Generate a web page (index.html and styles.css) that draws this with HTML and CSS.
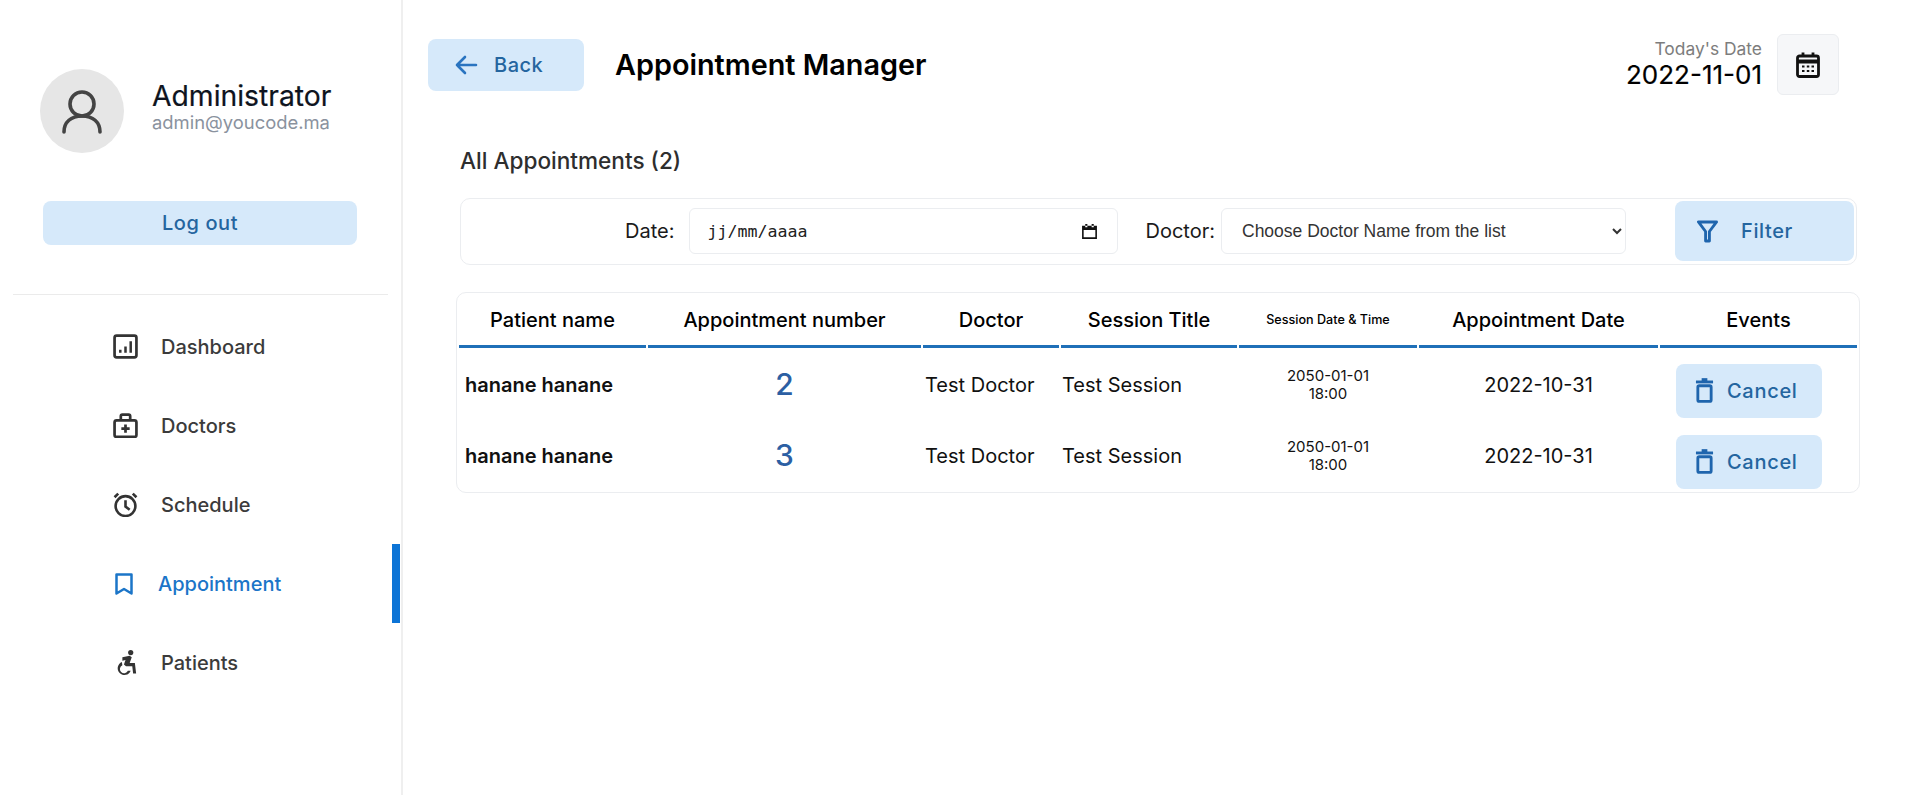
FILE: index.html
```html
<!DOCTYPE html>
<html lang="en">
<head>
<meta charset="utf-8">
<title>Appointment Manager</title>
<link rel="stylesheet" href="styles.css">
</head>
<body>
<div class="app">
  <aside class="sidebar">
    <div class="profile">
      <div class="avatar">
        <svg viewBox="0 0 40 44" width="40" height="44" fill="none" stroke="#444" stroke-width="3.6" stroke-linecap="round"><circle cx="20" cy="14" r="12"/><path d="M2 42c0-10 7-16 18-16s18 6 18 16"/></svg>
      </div>
      <div class="who">
        <div class="who-name">Administrator</div>
        <div class="who-mail">admin@youcode.ma</div>
      </div>
    </div>
    <button class="btn logout">Log out</button>
    <hr class="divider">
    <nav class="nav">
      <a class="nav-item">
        <svg class="nav-icon" viewBox="0 0 24 24" fill="none" stroke="#333" stroke-width="2.6"><rect x="1.500" y="1.500" width="21" height="21" rx="2"/><path d="M7 18v-3M12 18v-6M17 18V7" stroke-width="2.400"/></svg>
        <span>Dashboard</span>
      </a>
      <a class="nav-item">
        <svg class="nav-icon" viewBox="0 0 24 24" fill="none" stroke="#333" stroke-width="2.6"><rect x="1.500" y="7" width="21" height="16" rx="2"/><path d="M7.500 7V3a1.500 1.500 0 0 1 1.500-1.500h6A1.500 1.500 0 0 1 16.500 3v4M12 11v8M8 15h8"/></svg>
        <span>Doctors</span>
      </a>
      <a class="nav-item">
        <svg class="nav-icon" viewBox="0 0 24 24" fill="none" stroke="#333" stroke-width="2.5"><circle cx="12" cy="13.500" r="9.500"/><path d="M12 8v6l4 3M1.500 5 5 1.500M22.500 5 19 1.500"/></svg>
        <span>Schedule</span>
      </a>
      <a class="nav-item active">
        <svg class="nav-icon mark" viewBox="0 0 18 22" fill="none" stroke="#1b75c8" stroke-width="2.500"><path d="M1.500 1.500h15v19L9 16l-7.500 4.500z" stroke-linejoin="round"/></svg>
        <span>Appointment</span>
      </a>
      <a class="nav-item">
        <svg class="nav-icon" viewBox="0 0 24 24" fill="#333"><circle cx="17" cy="2.500" r="2.500"/><path d="M9 7 16 5.500l2 1.500-2 5.500h5l1.200 10h-2.900l-.8-7H12.500L10.500 14l1.500-4.500-3 .8z"/><path d="M8.500 11.500a6.500 6.500 0 1 0 8.500 8.500h-2.700a4 4 0 1 1-5.300-5.300z"/></svg>
        <span>Patients</span>
      </a>
    </nav>
  </aside>
  <main class="main">
    <header class="topbar">
      <button class="btn back">
        <svg viewBox="0 0 24 24" width="24" height="24" fill="none" stroke="#2a74c0" stroke-width="2.600" stroke-linecap="round" stroke-linejoin="round"><path d="M22 12H3M11 4l-8 8 8 8"/></svg>
        <span>Back</span>
      </button>
      <h1 class="title">Appointment Manager</h1>
      <div class="today">
        <div class="today-label">Today's Date</div>
        <div class="today-value">2022-11-01</div>
      </div>
      <div class="calendar">
        <svg viewBox="0 0 24 26" width="24" height="26" fill="none" stroke="#111" stroke-width="2.800"><rect x="1.500" y="4" width="21" height="20.500" rx="2"/><path d="M1.500 9.500h21" stroke-width="4"/><path d="M7 0.500V4M17 0.500V4"/><path d="M6 14.500h2.500M10.800 14.500h2.500M15.500 14.500h2.500M6 19h2.500M10.800 19h2.500M15.500 19h2.500" stroke-width="2.200"/></svg>
      </div>
    </header>
    <section class="content">
      <h2 class="section-title">All Appointments (2)</h2>
      <form class="filter">
        <label class="filter-label date-label">Date:</label>
        <div class="field date-field">
          <span>jj/mm/aaaa</span>
          <svg viewBox="0 0 16 16" width="17" height="17" fill="#111"><path d="M1 2.500h14V15H1zM2.500 6.500v7h11v-7zM4 1h2v3H4zM10 1h2v3h-2z" fill-rule="evenodd"/></svg>
        </div>
        <label class="filter-label doctor-label">Doctor:</label>
        <select class="field doctor-select"><option>Choose Doctor Name from the list</option></select>
        <button type="button" class="btn filter-btn">
          <svg viewBox="0 0 22 24" width="21" height="23" fill="none" stroke="#1f65ad" stroke-width="3" stroke-linejoin="round"><path d="M1.500 2h19l-7.500 10v10h-4V12z"/></svg>
          <span>Filter</span>
        </button>
      </form>
      <div class="table-wrap">
        <table class="table">
          <colgroup>
            <col class="c1"><col class="c2"><col class="c3"><col class="c4"><col class="c5"><col class="c6"><col class="c7">
          </colgroup>
          <thead>
            <tr>
              <th>Patient name</th>
              <th>Appointment number</th>
              <th>Doctor</th>
              <th>Session Title</th>
              <th class="small-head">Session Date &amp; Time</th>
              <th>Appointment Date</th>
              <th>Events</th>
            </tr>
          </thead>
          <tbody>
            <tr>
              <td class="patient">hanane hanane</td>
              <td class="num">2</td>
              <td class="doc">Test Doctor</td>
              <td>Test Session</td>
              <td class="when">2050-01-01<br>18:00</td>
              <td class="center">2022-10-31</td>
              <td class="events"><button class="btn cancel"><svg viewBox="0 0 20 26" width="19" height="25" fill="none" stroke="#1f65ad" stroke-width="3"><rect x="3" y="8" width="14" height="16.500" rx="1.500"/><path d="M1 4h18" stroke-width="3"/><path d="M7 1.500h6" stroke-width="3"/></svg><span>Cancel</span></button></td>
            </tr>
            <tr>
              <td class="patient">hanane hanane</td>
              <td class="num">3</td>
              <td class="doc">Test Doctor</td>
              <td>Test Session</td>
              <td class="when">2050-01-01<br>18:00</td>
              <td class="center">2022-10-31</td>
              <td class="events"><button class="btn cancel"><svg viewBox="0 0 20 26" width="19" height="25" fill="none" stroke="#1f65ad" stroke-width="3"><rect x="3" y="8" width="14" height="16.500" rx="1.500"/><path d="M1 4h18" stroke-width="3"/><path d="M7 1.500h6" stroke-width="3"/></svg><span>Cancel</span></button></td>
            </tr>
          </tbody>
        </table>
      </div>
    </section>
  </main>
</div>
</body>
</html>
```
FILE: styles.css
```css
* { box-sizing: border-box; }
html, body { margin: 0; height: 100%; background: #fff; overflow: hidden; }
body { font-family: Inter, "Liberation Sans", sans-serif; color: #000; }
.app { display: flex; height: 795px; }

.btn {
  border: 0; background: #d6e9fa; border-radius: 8px; font-family: inherit; color: #24659f;
  font-weight: 500; display: flex; align-items: center; justify-content: center;
}

/* sidebar */
.sidebar { width: 403px; flex: none; border-right: 2px solid #efefef; padding-top: 69px; }
.profile { display: flex; align-items: flex-start; padding-left: 40px; gap: 28px; height: 85px; }
.avatar { width: 84px; height: 84px; border-radius: 50%; background: #e6e6e6; display: flex; align-items: center; justify-content: center; flex: none; padding-top: 2px; }
.who { padding-top: 11px; }
.who-name { font-size: 28.300px; font-weight: 400; line-height: 32px; color: #0e1420; -webkit-text-stroke: 0.2px #0e1420; }
.who-mail { font-size: 18.400px; line-height: 22px; color: #8a929e; margin-top: -1px; }
.logout { width: 314px; height: 44px; margin: 47px 0 0 43px; font-size: 20px; letter-spacing: 0.6px; }
.divider { border: 0; height: 1px; background: #ebebeb; margin: 49px 13px 0 13px; }
.nav { display: flex; flex-direction: column; margin-top: 12px; }
.nav-item { height: 79px; display: flex; align-items: center; padding-left: 113px; gap: 23px; font-size: 20px; font-weight: 500; color: #3b3b3b; }
.nav-icon { width: 25px; height: 25px; flex: none; }
.nav-item.active { color: #1b75c8; border-right: 8px solid #0c74d6; padding-left: 115px; gap: 25px; width: 400px; }
.nav-icon.mark { width: 18px; height: 22px; }

/* main */
.main { flex: 1; min-width: 0; padding: 34px 0 0 25px; }
.topbar { display: flex; align-items: center; height: 61px; padding-right: 74px; }
.back { width: 156px; height: 52px; gap: 16px; font-size: 20px; letter-spacing: 0.5px; justify-content: flex-start; padding: 0 0 0 26px; }
.title { margin: 0 0 0 31px; font-size: 28.800px; font-weight: 600; flex: 1; }
.today { text-align: right; margin-right: 15px; }
.today-label { font-size: 17.400px; color: #7d7d7d; line-height: 20px; }
.today-value { font-size: 26px; line-height: 30px; font-weight: 400; margin-top: 1px; -webkit-text-stroke: 0.2px #000; }
.calendar { width: 62px; height: 61px; background: #f6f7f9; border: 1px solid #ebedf0; border-radius: 6px; display: flex; align-items: center; justify-content: center; }

.content { padding-left: 32px; }
.section-title { margin: 0; padding-top: 52px; font-size: 22.600px; line-height: 28px; font-weight: 500; color: #2e2e2e; }
.filter {
  display: flex; align-items: center; width: 1397px; height: 67px; margin-top: 23px; padding: 0 2px 0 0;
  border: 1px solid #ebedf0; border-radius: 10px; justify-content: flex-end;
}
.filter-label { font-size: 20px; color: #1a1a1a; white-space: nowrap; margin-top: -1px; }
.date-label { margin-right: 14px; }
.field { height: 46px; border: 1px solid #ebedf0; border-radius: 6px; background: #fff; margin-top: -1px; }
.date-field { width: 429px; display: flex; align-items: center; justify-content: space-between; padding: 0 19px 0 18px; font-family: "DejaVu Sans Mono", monospace; font-size: 16.600px; color: #222; }
.doctor-label { margin-left: 28px; margin-right: 6px; }
.doctor-select { width: 405px; padding: 0 0 0 16px; font-family: "Liberation Sans", sans-serif; font-size: 17.500px; color: #333; }
.filter-btn { width: 179px; height: 60px; gap: 23px; font-size: 20px; margin-left: 49px; letter-spacing: 0.6px; justify-content: flex-start; padding: 0 0 0 22px; margin-top: -1px; }

.table-wrap { width: 1404px; height: 201px; margin: 27px 0 0 -4px; border: 1px solid #ebedf0; border-radius: 10px; }
.table { table-layout: fixed; width: 1402px; border-collapse: separate; border-spacing: 2px; }
.c1 { width: 187px; } .c2 { width: 273px; } .c3 { width: 136px; } .c4 { width: 176px; } .c5 { width: 178px; } .c6 { width: 239px; } .c7 { width: 197px; }
th { height: 53px; border-bottom: 3px solid #1f70b8; font-size: 20px; font-weight: 500; padding: 0; text-align: center; }
th.small-head { font-size: 12.600px; padding-bottom: 2px; }
td { height: 69px; padding: 0 1px; font-size: 20px; color: #111; }
.patient { font-weight: 600; padding-left: 6px; }
.num { text-align: center; font-size: 30px; font-weight: 500; color: #2c5fa3; padding-bottom: 2px; }
.doc { padding-left: 2px; }
.when { text-align: center; font-size: 15px; line-height: 18px; }
.center { text-align: center; }
.events { padding: 0 0 0 16px; }
.cancel { width: 146px; height: 54px; gap: 13px; font-size: 20px; letter-spacing: 0.7px; margin-top: 6px; margin-bottom: -6px; justify-content: flex-start; padding: 0 0 0 19px; }
```
